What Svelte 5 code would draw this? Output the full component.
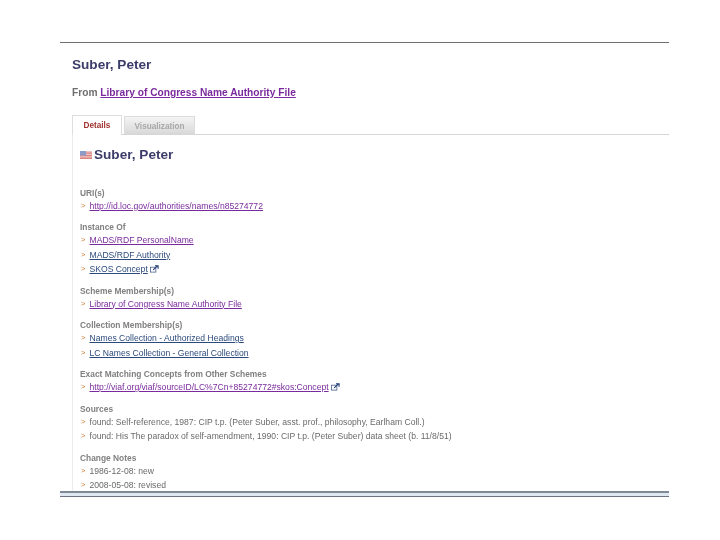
<script>
	const sections = [
		{ label: 'URI(s)', items: [{ text: 'http://id.loc.gov/authorities/names/n85274772', href: 'visited' }] },
		{
			label: 'Instance Of',
			items: [
				{ text: 'MADS/RDF PersonalName', href: 'visited' },
				{ text: 'MADS/RDF Authority', href: 'link' },
				{ text: 'SKOS Concept', href: 'link', ext: true }
			]
		},
		{ label: 'Scheme Membership(s)', items: [{ text: 'Library of Congress Name Authority File', href: 'visited' }] },
		{
			label: 'Collection Membership(s)',
			items: [
				{ text: 'Names Collection - Authorized Headings', href: 'link' },
				{ text: 'LC Names Collection - General Collection', href: 'link' }
			]
		},
		{
			label: 'Exact Matching Concepts from Other Schemes',
			items: [{ text: 'http://viaf.org/viaf/sourceID/LC%7Cn+85274772#skos:Concept', href: 'visited', ext: true }]
		},
		{
			label: 'Sources',
			items: [
				{ text: 'found: Self-reference, 1987: CIP t.p. (Peter Suber, asst. prof., philosophy, Earlham Coll.)' },
				{ text: 'found: His The paradox of self-amendment, 1990: CIP t.p. (Peter Suber) data sheet (b. 11/8/51)' }
			]
		},
		{ label: 'Change Notes', items: [{ text: '1986-12-08: new' }, { text: '2008-05-08: revised' }] }
	];
</script>

<div class="slide">
	<div class="page">
		<h1>Suber, Peter</h1>
		<p class="from">From <a class="visited" href="#lcnaf">Library of Congress Name Authority File</a></p>

		<div class="tabs">
			<span class="tab active">Details</span>
			<span class="tab">Visualization</span>
		</div>

		<div class="panel">
			<h2>
				<svg class="flag" width="12" height="8" viewBox="0 0 12 8">
					<rect width="12" height="8" fill="#edc4c2" />
					<rect y="1.5" width="12" height="1.2" fill="#dc8480" />
					<rect y="4" width="12" height="1.2" fill="#dc8480" />
					<rect y="6.5" width="12" height="1.5" fill="#dc8480" />
					<rect width="6" height="4.5" fill="#8b9ccb" />
				</svg>
				Suber, Peter
			</h2>

			{#each sections as section}
				<section>
					<h3>{section.label}</h3>
					<ul>
						{#each section.items as item}
							<li>
								<span class="chevron">&gt;</span>
								{#if item.href}
									<a class={item.href} href="#item">{item.text}</a>
								{:else}
									{item.text}
								{/if}
								{#if item.ext}
									<svg class="ext" width="9" height="8" viewBox="0 0 10 9" fill="none">
										<rect x="0.5" y="2.5" width="6" height="5.5" stroke="#5a6f96" />
										<path d="M3.5 5.5 L8 1.2 M5.5 0.8 H9 V4.2" stroke="#1f3f73" stroke-width="1.3" />
									</svg>
								{/if}
							</li>
						{/each}
					</ul>
				</section>
			{/each}
		</div>
	</div>
	<div class="footer-bar"></div>
</div>

<style>
	:global(body) {
		margin: 0;
		background: #fff;
	}

	.slide {
		width: 720px;
		height: 540px;
		padding: 42px 51px 0 60px;
		box-sizing: border-box;
		font-family: 'Liberation Sans', Arial, sans-serif;
	}

	.page {
		height: 448px;
		overflow: hidden;
		border-top: 1px solid #6f6f6f;
		padding-left: 12px;
		filter: blur(0.3px);
	}

	h1 {
		margin: 14px 0 0;
		font-size: 13.6px;
		line-height: 16px;
		font-weight: bold;
		color: #3c3c6a;
	}

	.from {
		margin: 13px 0 0;
		font-size: 10.2px;
		line-height: 14px;
		font-weight: bold;
		color: #6e6e6e;
	}

	.visited {
		color: #7a2a9c;
	}

	.link {
		color: #2c4a7c;
	}

	.tabs {
		display: flex;
		gap: 2px;
		align-items: flex-end;
		margin-top: 15px;
		height: 19px;
		border-bottom: 1px solid #d6d6d6;
		font-size: 8.2px;
		font-weight: bold;
	}

	.tab {
		height: 18px;
		width: 71px;
		box-sizing: border-box;
		text-align: center;
		line-height: 19px;
		color: #a8a8a8;
		background: linear-gradient(#f4f4f4, #d8d8d8);
		border: 1px solid #dcdcdc;
		border-bottom: none;
	}

	.tab.active {
		width: 50px;
		height: 20px;
		line-height: 20px;
		margin-bottom: -1px;
		color: #a0332f;
		background: #fff;
		border-color: #dedede;
	}

	.panel {
		border-left: 1px solid #ececec;
		padding: 12px 0 0 7px;
	}

	h2 {
		display: flex;
		align-items: center;
		gap: 2px;
		margin: 0;
		font-size: 13.6px;
		line-height: 16px;
		font-weight: bold;
		color: #3c3c6a;
	}

	section {
		margin-bottom: 8px;
	}

	section:first-of-type {
		margin-top: 23.5px;
	}

	h3 {
		margin: 0;
		font-size: 8.4px;
		line-height: 12px;
		font-weight: bold;
		color: #808080;
	}

	ul {
		margin: 0;
		padding: 0;
		list-style: none;
	}

	li {
		position: relative;
		padding-left: 9.5px;
		font-size: 8.6px;
		line-height: 14.5px;
		color: #6a6a6a;
		white-space: nowrap;
	}

	.chevron {
		position: absolute;
		left: 1px;
		top: 0;
		color: #c9772a;
		font-size: 7.5px;
	}

	.ext {
		vertical-align: -1px;
	}

	.footer-bar {
		height: 6px;
		box-sizing: border-box;
		background: #dfe7f0;
		border-top: 2px solid #7f8a96;
		border-bottom: 1px solid #6b7480;
	}
</style>
